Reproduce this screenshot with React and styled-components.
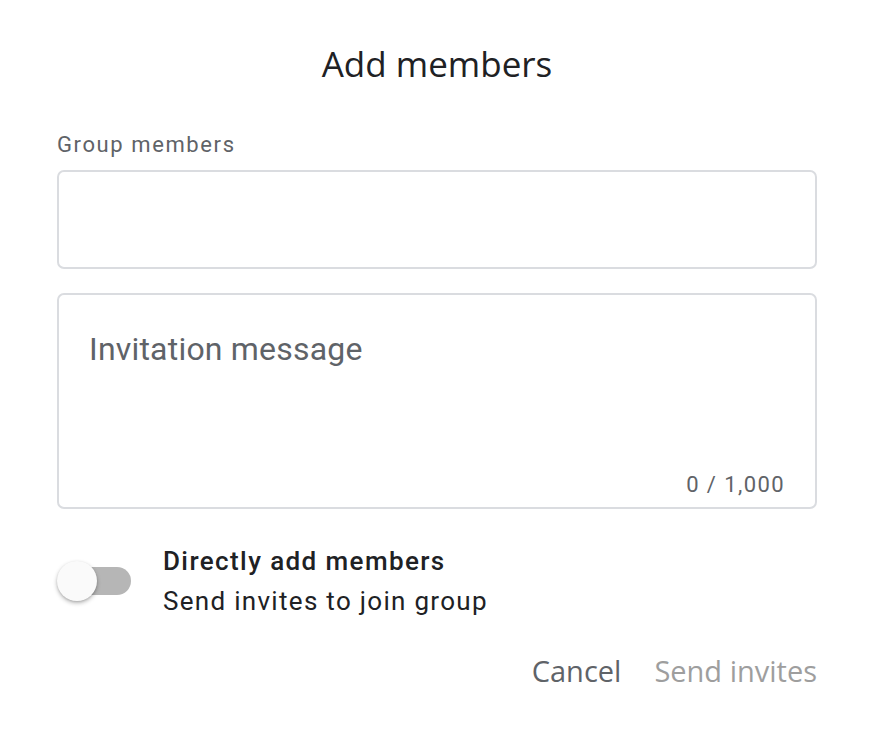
import React, { useState } from 'react';
import styled, { createGlobalStyle } from 'styled-components';

const GlobalStyle = createGlobalStyle`
	html, body {
		margin: 0;
		padding: 0;
		background: #fff;
	}
	body {
		font-family: Roboto, 'Liberation Sans', sans-serif;
		color: #202124;
	}
`;

const Dialog = styled.div`
	width: 878px;
	height: 756px;
	box-sizing: border-box;
	padding: 42px 61px 0 57px;
	display: flex;
	flex-direction: column;
`;

const Title = styled.h1`
	margin: 0;
	text-align: center;
	font-family: 'Open Sans', Roboto, sans-serif;
	font-weight: 400;
	font-size: 35px;
	line-height: 44px;
	color: #202124;
`;

const Label = styled.label`
	margin-top: 46px;
	font-size: 22px;
	line-height: 26px;
	letter-spacing: 1.6px;
	color: #5f6368;
`;

const Field = styled.div`
	box-sizing: border-box;
	border: 2px solid #dadce0;
	border-radius: 7px;
	height: ${(p) => p.height}px;
	margin-top: ${(p) => p.gap}px;
	display: flex;
	flex-direction: column;
	justify-content: space-between;
	padding: ${(p) => (p.padded ? '35px 30px 9px 30px' : '0')};
`;

const Placeholder = styled.div`
	font-size: 32px;
	line-height: 38px;
	letter-spacing: 0.2px;
	color: #5f6368;
`;

const Counter = styled.div`
	align-self: flex-end;
	font-size: 22px;
	line-height: 26px;
	letter-spacing: 1.4px;
	color: #5f6368;
`;

const ToggleRow = styled.div`
	margin-top: 37px;
	display: flex;
	align-items: center;
	gap: 32px;
`;

const Track = styled.button`
	position: relative;
	width: 74px;
	height: 42px;
	padding: 0;
	border: none;
	background: none;
	cursor: pointer;
	flex-shrink: 0;

	&::before {
		content: '';
		position: absolute;
		left: 18px;
		top: 7px;
		width: 56px;
		height: 28px;
		border-radius: 14px;
		background: ${(p) => (p.on ? '#8ab4f8' : '#b6b6b6')};
	}
`;

const Knob = styled.span`
	position: absolute;
	top: 1px;
	left: ${(p) => (p.on ? '34px' : '0')};
	width: 40px;
	height: 40px;
	border-radius: 50%;
	background: ${(p) => (p.on ? '#1a73e8' : '#fafafa')};
	box-shadow: 0 2px 4px rgba(0, 0, 0, 0.28), 0 1px 2px rgba(0, 0, 0, 0.1);
`;

const ToggleText = styled.div`
	display: flex;
	flex-direction: column;
	gap: 10px;
`;

const ToggleTitle = styled.div`
	font-size: 26px;
	line-height: 30px;
	font-weight: 500;
	color: #202124;
	letter-spacing: 1.4px;
`;

const ToggleSub = styled.div`
	font-size: 26px;
	line-height: 30px;
	color: #202124;
	letter-spacing: 1.3px;
`;

const Actions = styled.div`
	margin-top: 37px;
	display: flex;
	justify-content: flex-end;
	gap: 33px;
`;

const TextButton = styled.button`
	border: none;
	background: none;
	padding: 0;
	font-family: 'Open Sans', Roboto, sans-serif;
	font-size: 29px;
	line-height: 36px;
	font-weight: 500;
	color: ${(p) => (p.disabled ? '#9e9e9e' : '#5f6368')};
	cursor: ${(p) => (p.disabled ? 'default' : 'pointer')};
`;

export default function App() {
	const [direct, setDirect] = useState(false);

	return (
		<>
			<GlobalStyle />
			<Dialog>
				<Title>Add members</Title>
				<Label>Group members</Label>
				<Field height={99} gap={12} />
				<Field height={216} gap={24} padded>
					<Placeholder>Invitation message</Placeholder>
					<Counter>0 / 1,000</Counter>
				</Field>
				<ToggleRow>
					<Track on={direct} onClick={() => setDirect(!direct)}>
						<Knob on={direct} />
					</Track>
					<ToggleText>
						<ToggleTitle>Directly add members</ToggleTitle>
						<ToggleSub>Send invites to join group</ToggleSub>
					</ToggleText>
				</ToggleRow>
				<Actions>
					<TextButton>Cancel</TextButton>
					<TextButton disabled>Send invites</TextButton>
				</Actions>
			</Dialog>
		</>
	);
}
